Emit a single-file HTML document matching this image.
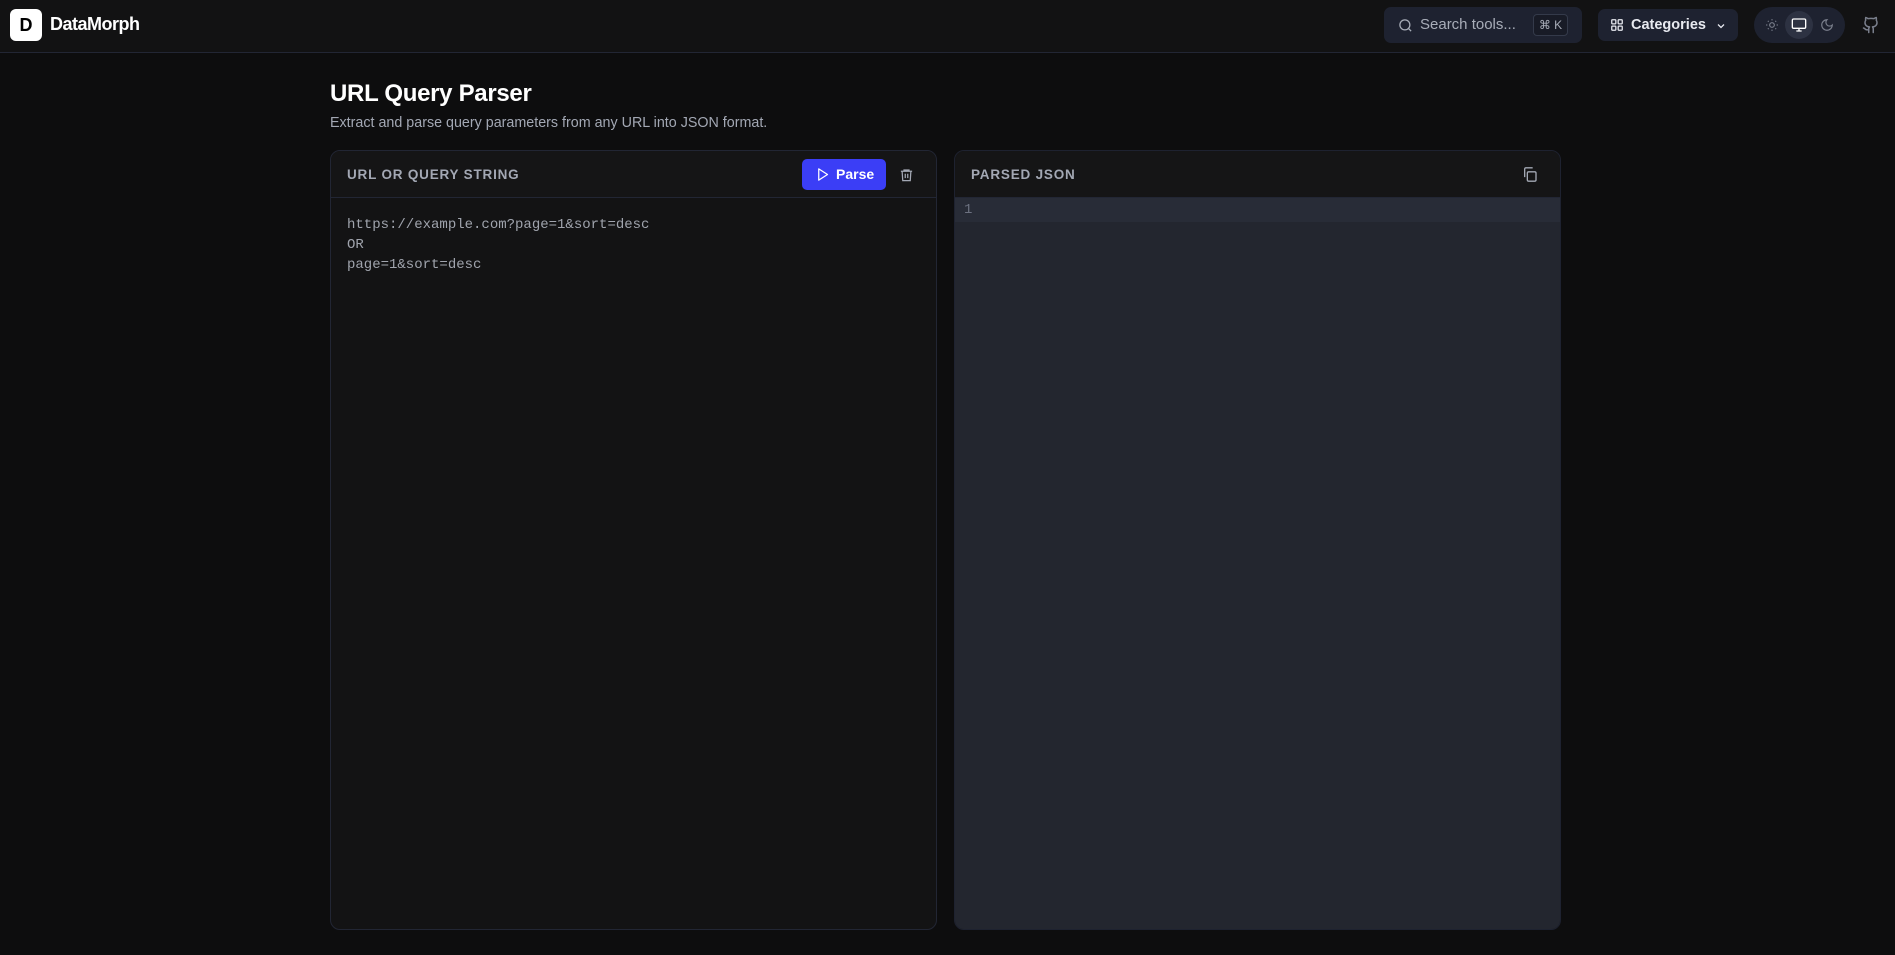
<!DOCTYPE html>
<html><head><meta charset="utf-8"><style>
*{box-sizing:border-box;margin:0;padding:0}
body{width:1895px;height:955px;background:#0d0d0e;font-family:"Liberation Sans",sans-serif;color:#fff;position:relative;overflow:hidden}
.hdr{position:absolute;left:0;top:0;width:1895px;height:53px;background:#121213;border-bottom:1px solid #222634}
.logo{position:absolute;left:10px;top:9px;width:32px;height:32px;background:#fff;border-radius:6px;color:#000;font-weight:bold;font-size:18px;text-align:center;line-height:32px}
.brand{position:absolute;left:50px;top:14px;font-size:18px;font-weight:bold;letter-spacing:-0.5px}
.search{position:absolute;left:1384px;top:7px;width:198px;height:36px;background:#1e2230;border-radius:7px}
.search span{position:absolute;left:36px;top:9px;font-size:15px;color:#a8adb8}
.kbd{position:absolute;left:149px;top:7px;width:35px;height:22px;border:1px solid #343a4a;border-radius:4px;font-size:12px;color:#a8adb8;text-align:center;line-height:20px;background:#181b26}
.cat{position:absolute;left:1598px;top:9px;width:140px;height:32px;background:#1e2230;border-radius:7px}
.cat span{position:absolute;left:33px;top:8px;font-size:14.5px;font-weight:bold;color:#e8eaf0}
.theme{position:absolute;left:1754px;top:7px;width:91px;height:36px;background:#1e2230;border-radius:18px}
.theme .act{position:absolute;left:31px;top:4px;width:28px;height:28px;border-radius:14px;background:#2d3242}
h1{position:absolute;left:330px;top:80px;font-size:24px;font-weight:bold;letter-spacing:-0.3px}
.sub{position:absolute;left:330px;top:115px;font-size:14.3px;color:#a3a8b4}
.panel{position:absolute;top:150px;height:780px;width:607px;border:1px solid #222634;border-radius:10px;background:#131314;overflow:hidden}
.ph{height:47px;border-bottom:1px solid #222634;background:#151516;position:relative}
.ph .lab{position:absolute;left:16px;top:16px;font-size:13.5px;font-weight:bold;letter-spacing:0.8px;color:#a3a8b4}
.parse{position:absolute;left:471px;top:8px;width:84px;height:31px;background:#3b3ef6;border-radius:5px}
.parse span{position:absolute;left:34px;top:7px;font-size:14px;font-weight:bold}
.code{position:absolute;left:16px;top:64px;font-family:"Liberation Mono",monospace;font-size:14px;line-height:20px;color:#a0a4ad}
.rbody{position:absolute;left:0;top:47px;right:0;bottom:0;background:#23262f}
.hl{position:absolute;left:0;top:0;right:0;height:24px;background:#282c37}
.hl span{position:absolute;left:9px;top:4px;font-family:"Liberation Mono",monospace;font-size:14px;color:#6c7180}
</style></head><body>
<div class="hdr">
<div class="logo">D</div><div class="brand">DataMorph</div>
<div class="search">
<svg style="position:absolute;left:14px;top:11px" width="15" height="15" viewBox="0 0 24 24" fill="none" stroke="#a8adb8" stroke-width="2"><circle cx="11" cy="11" r="8"/><path d="M21 21l-4.3-4.3"/></svg>
<span>Search tools...</span><div class="kbd">⌘ K</div></div>
<div class="cat">
<svg style="position:absolute;left:12px;top:9px" width="14" height="14" viewBox="0 0 24 24" fill="none" stroke="#e8eaf0" stroke-width="2.2"><rect x="3" y="3" width="7" height="7" rx="1"/><rect x="14" y="3" width="7" height="7" rx="1"/><rect x="3" y="14" width="7" height="7" rx="1"/><rect x="14" y="14" width="7" height="7" rx="1"/></svg>
<span>Categories</span>
<svg style="position:absolute;left:117px;top:11px" width="12" height="12" viewBox="0 0 24 24" fill="none" stroke="#e8eaf0" stroke-width="2.5"><path d="M6 9l6 6 6-6"/></svg></div>
<div class="theme">
<svg style="position:absolute;left:11px;top:11px" width="14" height="14" viewBox="0 0 24 24" fill="none" stroke="#7a7f8c" stroke-width="2"><circle cx="12" cy="12" r="4"/><path d="M12 2v2M12 20v2M4.9 4.9l1.4 1.4M17.7 17.7l1.4 1.4M2 12h2M20 12h2M4.9 19.1l1.4-1.4M17.7 6.3l1.4-1.4"/></svg>
<div class="act"><svg style="position:absolute;left:6px;top:6px" width="16" height="16" viewBox="0 0 24 24" fill="none" stroke="#fff" stroke-width="2"><rect x="2" y="3" width="20" height="14" rx="2"/><path d="M8 21h8M12 17v4"/></svg></div>
<svg style="position:absolute;left:66px;top:11px" width="14" height="14" viewBox="0 0 24 24" fill="none" stroke="#7a7f8c" stroke-width="2"><path d="M12 3a6 6 0 0 0 9 9 9 9 0 1 1-9-9z"/></svg></div>
<svg style="position:absolute;left:1862px;top:15px" width="18" height="20" viewBox="0 0 24 24" fill="none" stroke="#7a7f8c" stroke-width="2" stroke-linecap="round" stroke-linejoin="round"><path d="M15 22v-4a4.8 4.8 0 0 0-1-3.5c3 0 6-2 6-5.5.08-1.25-.27-2.48-1-3.5.28-1.15.28-2.35 0-3.5 0 0-1 0-3 1.5-2.64-.5-5.36-.5-8 0C6 2 5 2 5 2c-.3 1.15-.3 2.35 0 3.5A5.4 5.4 0 0 0 4 9c0 3.5 3 5.5 6 5.5-.39.49-.68 1.05-.85 1.65-.17.6-.22 1.23-.15 1.85v4"/><path d="M9 18c-4.51 2-5-2-7-2"/></svg>
</div>
<h1>URL Query Parser</h1>
<div class="sub">Extract and parse query parameters from any URL into JSON format.</div>
<div class="panel" style="left:330px">
<div class="ph"><div class="lab">URL OR QUERY STRING</div>
<div class="parse"><svg style="position:absolute;left:13px;top:8px" width="15" height="15" viewBox="0 0 24 24" fill="none" stroke="#fff" stroke-width="2" stroke-linejoin="round"><path d="M6 3l14 9-14 9z"/></svg><span>Parse</span></div>
<svg style="position:absolute;left:568px;top:16px" width="15" height="16" viewBox="0 0 24 24" fill="none" stroke="#a3a8b4" stroke-width="2"><path d="M3 6h18M8 6V4h8v2M5 6l1 15h12l1-15M10 10v7M14 10v7"/></svg></div>
<div class="code">https://example.com?page=1&amp;sort=desc<br>OR<br>page=1&amp;sort=desc</div>
</div>
<div class="panel" style="left:954px;border-color:#1e2230">
<div class="ph"><div class="lab">PARSED JSON</div>
<svg style="position:absolute;left:567px;top:15px" width="16" height="17" viewBox="0 0 24 24" fill="none" stroke="#a3a8b4" stroke-width="2"><rect x="8" y="8" width="13" height="14" rx="2"/><path d="M4 16V4a2 2 0 0 1 2-2h10"/></svg></div>
<div class="rbody"><div class="hl"><span>1</span></div></div>
</div>
</body></html>
